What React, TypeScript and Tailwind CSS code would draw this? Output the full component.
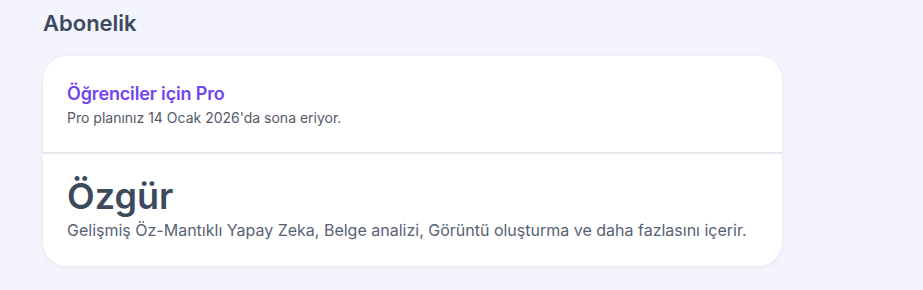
import React from 'react';

export default function App() {
  return (
    <div className="min-h-[290px] w-full bg-[#f4f4fd] px-[43px] pt-[8px] font-['Inter',sans-serif]">
      <h2 className="text-[22px] leading-[30px] font-semibold text-[#3d4a5e]">Abonelik</h2>
      <div className="mt-[18px] w-[739px] rounded-[24px] bg-white shadow-[0_1px_4px_rgba(60,60,120,0.08)]">
        <div className="px-[24px] pt-[24px] pb-[24px] border-b-2 border-[#e6e6ee]">
          <div className="text-[18px] leading-[28px] font-semibold tracking-[-0.15px] text-[#7045f0]">Öğrenciler için Pro</div>
          <div className="text-[14px] leading-[20px] text-[#545a66]">Pro planınız 14 Ocak 2026'da sona eriyor.</div>
        </div>
        <div className="px-[24px] pt-[22px] pb-[24px]">
          <div className="text-[36px] leading-[40px] font-semibold text-[#3d4a5e]">Özgür</div>
          <div className="mt-[2px] text-[16px] leading-[24px] text-[#586275]">
            Gelişmiş Öz-Mantıklı Yapay Zeka, Belge analizi, Görüntü oluşturma ve daha fazlasını içerir.
          </div>
        </div>
      </div>
    </div>
  );
}
